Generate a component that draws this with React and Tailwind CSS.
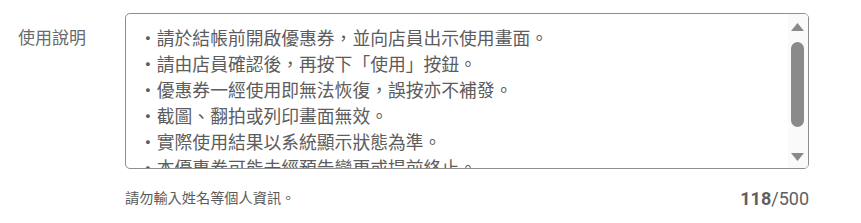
import React from "react";

const lines = [
  "・請於結帳前開啟優惠券，並向店員出示使用畫面。",
  "・請由店員確認後，再按下「使用」按鈕。",
  "・優惠券一經使用即無法恢復，誤按亦不補發。",
  "・截圖、翻拍或列印畫面無效。",
  "・實際使用結果以系統顯示狀態為準。",
  "・本優惠券可能未經預告變更或提前終止。",
];

const font = { fontFamily: '"Noto Sans CJK TC", "Noto Sans", sans-serif' };

const App = () => {
  return (
    <div className="w-[861px] h-[223px] bg-white pt-[13px]" style={font}>
      <div className="flex">
        <div className="w-[125px] shrink-0 pl-[18px] pt-[11px] text-[17px] leading-[26px] text-[#6a6a6a]">
          使用說明
        </div>
        <div className="relative w-[684px] h-[156px] rounded-[5px] border border-[#8e8e8e] overflow-hidden">
          <div className="pl-[13px] pt-[10px] pr-[24px] text-[17.8px] leading-[26px] text-[#5c5c5c]">
            {lines.map((l) => (
              <div key={l} className="whitespace-nowrap">
                {l}
              </div>
            ))}
          </div>

          {/* scrollbar */}
          <div className="absolute right-0 top-0 bottom-0 w-[20px] bg-[#fafafa]">
            <svg className="absolute left-[3px] top-[9px]" width="13" height="8" viewBox="0 0 13 8">
              <polygon points="6.5,0 13,8 0,8" fill="#8a8a8a" />
            </svg>
            <div className="absolute left-[3px] top-[28px] w-[13px] h-[85px] rounded-full bg-[#8a8a8a]" />
            <svg className="absolute left-[3px] top-[139px]" width="13" height="8" viewBox="0 0 13 8">
              <polygon points="0,0 13,0 6.5,8" fill="#8a8a8a" />
            </svg>
          </div>
        </div>
      </div>

      <div className="flex items-center justify-between ml-[125px] w-[684px] mt-[19px] h-[20px]">
        <span className="text-[14.2px] text-[#5a5a5a]">請勿輸入姓名等個人資訊。</span>
        <span
          className="text-[18px] text-[#606060]"
          style={{ fontFamily: 'Roboto, "Liberation Sans", sans-serif' }}
        >
          <span className="font-bold">118</span>/500
        </span>
      </div>
    </div>
  );
};

export default App;
